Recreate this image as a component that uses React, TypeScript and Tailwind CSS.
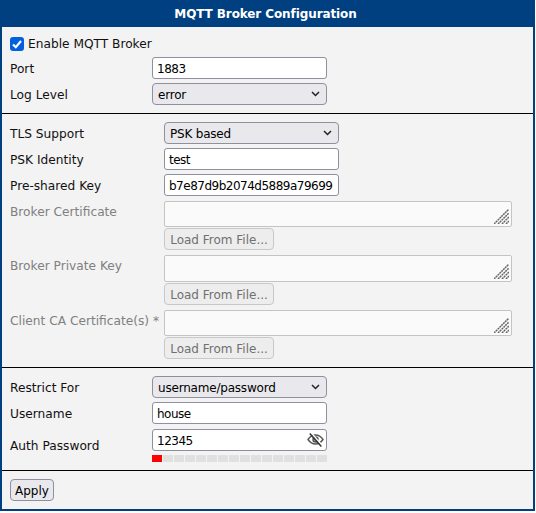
import React from 'react';

const fieldClass =
  'h-[22px] rounded-[3px] border border-[#8f8f9d] bg-white px-[4px] pb-0 pt-[2px] text-[12px] tracking-[-0.5px] text-black outline-none';

function Row({ label, width, children }: { label: string; width: string; children: React.ReactNode }) {
  return (
    <div className="flex items-center">
      <div className={`${width} shrink-0 pt-[2px] text-[12.2px] text-[#111]`}>{label}</div>
      {children}
    </div>
  );
}

function Select({ value, className }: { value: string; className: string }) {
  return (
    <div className={`relative ${className}`}>
      <select
        defaultValue={value}
        className="block h-[22px] w-full appearance-none rounded-[4px] border border-[#8f8f9d] bg-[#e9e9ed] px-[5px] pb-0 pt-[2px] text-[12px] tracking-[-0.2px] text-black outline-none"
      >
        <option>{value}</option>
      </select>
      <svg
        className="pointer-events-none absolute right-[7px] top-[8px]"
        width="9"
        height="6"
        viewBox="0 0 9 6"
        fill="none"
        stroke="#222"
        strokeWidth="1.5"
      >
        <path d="M1 1l3.5 3.5L8 1" />
      </svg>
    </div>
  );
}

function Resizer() {
  return (
    <svg
      className="pointer-events-none absolute bottom-[3px] right-[3px]"
      width="15"
      height="15"
      viewBox="0 0 15 15"
      stroke="#666"
      strokeWidth="1.5"
      strokeDasharray="2 0.6"
    >
      <path d="M0 15L15 0M4 15L15 4M8 15l7-7M12 15l3-3" />
    </svg>
  );
}

function CertField({ label, tall }: { label: string; tall?: boolean }) {
  return (
    <div className="mt-[1px] flex">
      <div className="w-[154px] shrink-0 whitespace-nowrap pt-[3px] text-[12.2px] leading-[16px] text-[#808080]">
        {label}
      </div>
      <div className="flex flex-col gap-[1px]">
        <div className={`relative w-[348px] ${tall ? 'h-[27px]' : 'h-[26px]'}`}>
          <textarea
            disabled
            className="block h-full w-full resize-none rounded-[2px] border border-[#c4c4c4] bg-[#fafafa] outline-none"
          />
          <Resizer />
        </div>
        <button className="h-[22px] w-[110px] rounded-[4px] border border-[#c8c8c8] bg-[#ededed] pt-[2px] text-[12px] text-[#707070]">
          Load From File...
        </button>
      </div>
    </div>
  );
}

function EyeOffIcon() {
  return (
    <svg
      className="pointer-events-none absolute right-[3px] top-[3px]"
      width="17"
      height="16"
      viewBox="0 0 17 16"
      fill="none"
      stroke="#555"
      strokeWidth="1.4"
    >
      <path d="M1 7.500C3 4.500 5.500 3 8.500 3s5.500 1.500 7.500 4.500C14 10.500 11.500 12 8.500 12S3 10.500 1 7.500z" />
      <circle cx="8.500" cy="7.500" r="2.500" fill="#aaa" />
      <path d="M3.800 0.500l11.500 13" stroke="#fff" strokeWidth="1.4" />
      <path d="M2.800 1.500l11.500 13" stroke="#333" strokeWidth="1.5" />
    </svg>
  );
}

export default function App() {
  const bars = Array.from({ length: 16 }, (_, i) => i);

  return (
    <div className="h-[513px] w-[536px] bg-white font-['DejaVu_Sans',sans-serif] text-[12.2px]">
      <div className="h-[511px] w-[535px] border-x-2 border-b-2 border-[#004080] bg-[#f3f3f3]">
        <div className="flex h-[27px] items-center justify-center bg-[#004080] pr-[4px] text-[12px] font-bold tracking-[-0.1px] text-white">
          MQTT Broker Configuration
        </div>

        <div className="flex flex-col gap-[4px] border-b border-black px-[8px] pb-[8px] pt-[7px]">
          <label className="mb-[-1px] flex h-[20px] items-center gap-[4px] text-[#111]">
            <span className="relative h-[14px] w-[14px]">
              <input
                type="checkbox"
                defaultChecked
                className="m-0 block h-[14px] w-[14px] appearance-none rounded-[3px] bg-[#0060df]"
              />
              <svg
                className="pointer-events-none absolute left-0 top-0"
                width="14"
                height="14"
                viewBox="0 0 14 14"
                fill="none"
                stroke="#fff"
                strokeWidth="2.2"
              >
                <path d="M3 7.500l2.800 2.700L11 4" />
              </svg>
            </span>
            Enable MQTT Broker
          </label>
          <Row label="Port" width="w-[142px]">
            <input readOnly defaultValue="1883" className={`${fieldClass} w-[175px]`} />
          </Row>
          <Row label="Log Level" width="w-[142px]">
            <Select value="error" className="w-[175px]" />
          </Row>
        </div>

        <div className="flex flex-col gap-[4px] border-b border-black px-[8px] pb-[8px] pt-[8px]">
          <Row label="TLS Support" width="w-[154px]">
            <Select value="PSK based" className="w-[175px]" />
          </Row>
          <Row label="PSK Identity" width="w-[154px]">
            <input readOnly defaultValue="test" className={`${fieldClass} w-[175px]`} />
          </Row>
          <Row label="Pre-shared Key" width="w-[154px]">
            <input readOnly defaultValue="b7e87d9b2074d5889a79699" className={`${fieldClass} w-[175px]`} />
          </Row>
          <CertField label="Broker Certificate" />
          <CertField label="Broker Private Key" tall />
          <CertField label="Client CA Certificate(s) *" />
        </div>

        <div className="flex flex-col gap-[4px] border-b border-black px-[8px] pb-[8px] pt-[8px]">
          <Row label="Restrict For" width="w-[142px]">
            <Select value="username/password" className="w-[175px]" />
          </Row>
          <Row label="Username" width="w-[142px]">
            <input readOnly defaultValue="house" className={`${fieldClass} w-[175px]`} />
          </Row>
          <div className="mt-[1px]">
            <Row label="Auth Password" width="w-[142px]">
              <div className="flex w-[175px] flex-col gap-[4px]">
                <div className="relative">
                  <input readOnly defaultValue="12345" className={`${fieldClass} w-full`} />
                  <EyeOffIcon />
                </div>
                <div className="flex gap-[1px]">
                  {bars.map((i) => (
                    <div key={i} className={`h-[7px] flex-1 ${i === 0 ? 'bg-[#ff0000]' : 'bg-[#e0e0e0]'}`} />
                  ))}
                </div>
              </div>
            </Row>
          </div>
        </div>

        <div className="px-[8px] pt-[8px]">
          <button className="h-[22px] w-[44px] rounded-[4px] border border-[#8f8f9d] bg-[#e9e9ed] pt-[2px] text-[12px] text-black">
            Apply
          </button>
        </div>
      </div>
    </div>
  );
}
